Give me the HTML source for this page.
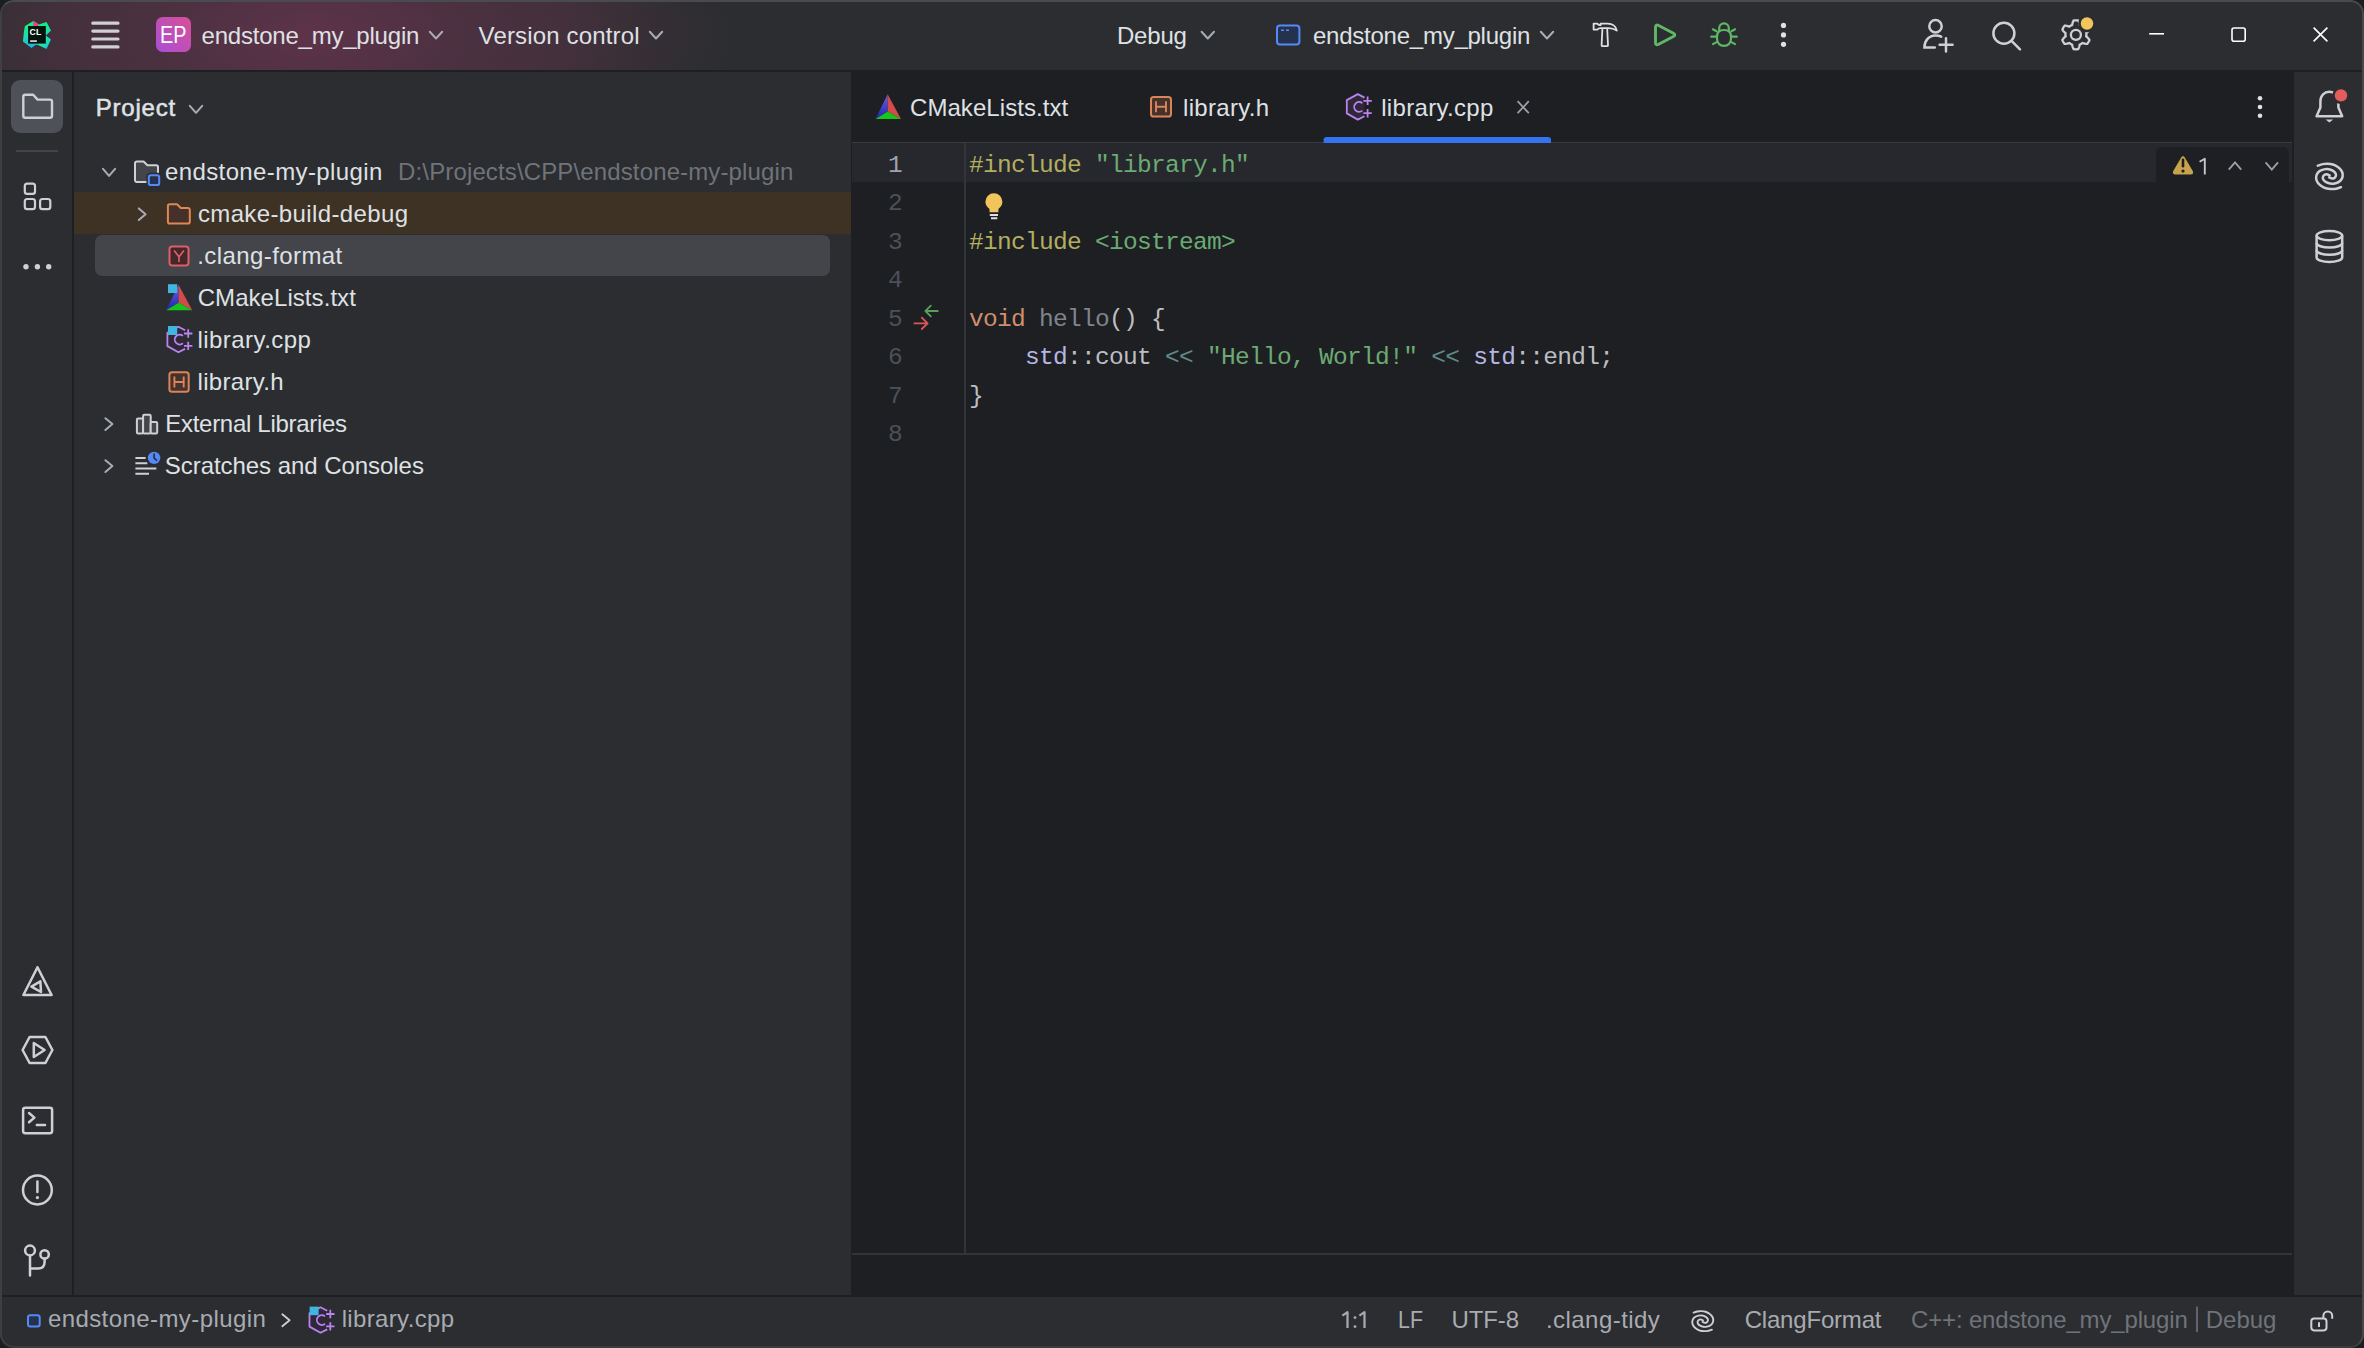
<!DOCTYPE html>
<html><head><meta charset="utf-8"><style>
html,body{margin:0;padding:0;}
body{width:2364px;height:1348px;overflow:hidden;position:relative;background:#1C1D20;font-family:"Liberation Sans", sans-serif;}
.r{position:absolute;}
.t{position:absolute;white-space:pre;line-height:1;font-family:"Liberation Sans", sans-serif;}
.c{position:absolute;white-space:pre;line-height:1;font-family:"Liberation Mono", monospace;}
</style></head><body>
<div class="r" style="left:0;top:0;width:2360px;height:1344px;border-style:solid;border-width:2px;border-color:#4A4B4F #48494B #3C3C3C #3E3F41;border-radius:14px;background:#2B2D30;"></div>
<div class="r" style="left:2px;top:2px;width:2360px;height:68px;border-radius:12px 12px 0 0;background:radial-gradient(ellipse 430px 200px at 310px 32px, #5e3349 0%, #4c3141 33%, #44303c 58%, #302e32 88%, #2b2d30 100%), #2B2D30;"></div>
<div class="r" style="left:2px;top:70px;width:2360px;height:2px;background:#1E1F22"></div>
<div class="r" style="left:72px;top:72px;width:2px;height:1223px;background:#1E1F22"></div>
<div class="r" style="left:851px;top:72px;width:1441px;height:1223px;background:#1E1F22"></div>
<div class="r" style="left:2292px;top:72px;width:2px;height:1223px;background:#1E1F22"></div>
<div class="r" style="left:2px;top:1295px;width:2360px;height:2px;background:#1E1F22"></div>
<!-- editor details -->
<div class="r" style="left:852px;top:142px;width:1440px;height:1px;background:#393B40"></div>
<div class="r" style="left:852px;top:143px;width:1440px;height:39px;background:#26282E"></div>
<div class="r" style="left:2156px;top:147px;width:133px;height:35px;background:#1E1F22;border-radius:6px 6px 0 0"></div>
<div class="r" style="left:964px;top:143px;width:2px;height:1110px;background:#313438"></div>
<div class="r" style="left:852px;top:1253px;width:1440px;height:2px;background:#313438"></div>
<!-- project tree rows -->
<div class="r" style="left:74px;top:192px;width:777px;height:42px;background:#3D3223"></div>
<div class="r" style="left:95px;top:235px;width:735px;height:41px;background:#43454A;border-radius:7px"></div>
<div class="r" style="left:11px;top:80px;width:52px;height:53px;background:#4E5157;border-radius:9px"></div>
<svg class="r" style="left:0;top:0" width="2364" height="1348"><defs>
<linearGradient id="epg" x1="0" y1="1" x2="1" y2="0"><stop offset="0" stop-color="#A94FD6"/><stop offset="1" stop-color="#D84F96"/></linearGradient>
<linearGradient id="clg" x1="0.2" y1="0" x2="0.4" y2="1"><stop offset="0" stop-color="#08F96A"/><stop offset="0.5" stop-color="#22DDAA"/><stop offset="1" stop-color="#14B0F2"/></linearGradient>
<linearGradient id="clg2" x1="0" y1="0.2" x2="1" y2="0.8"><stop offset="0" stop-color="#10F27A"/><stop offset="0.6" stop-color="#22E0B0"/><stop offset="1" stop-color="#19B5E8"/></linearGradient>
<linearGradient id="cmb" x1="0" y1="0" x2="0" y2="1"><stop offset="0" stop-color="#6A67E0"/><stop offset="1" stop-color="#1F1FAF"/></linearGradient>
</defs><g>
<polygon points="24.9,26 33.4,20.9 38.9,24.5 46.5,21.9 51,30.4 45.9,35.5 50.8,39.4 46.5,48.8 37.7,44.8 35.5,45 31.5,48.1 22.9,41.4 24,31.2" fill="url(#clg)"/>
<polygon points="45.9,36 50.8,39.4 46.5,48.8 37.7,44.8 36,44 45.8,42" fill="url(#clg2)"/>
<polygon points="33.4,20.9 38.9,24.5 37.4,26.5 33.4,26.2" fill="#F23C8C"/>
<rect x="28.1" y="26" width="17.7" height="17.6" fill="#03140C"/>
<text x="29.6" y="35" font-family="Liberation Sans" font-weight="700" font-size="9.4" fill="#fff" textLength="11.6" lengthAdjust="spacingAndGlyphs">CL</text>
<rect x="30.1" y="40.2" width="6.8" height="1.8" fill="#ccc"/>
</g>
<path d="M92.8,23.2 H118 M92.8,31.1 H118 M92.8,39 H118 M92.8,46.9 H118" stroke="#CED0D6" stroke-width="3.2" stroke-linecap="round" fill="none"/>
<rect x="156" y="17" width="35" height="35" rx="6.5" fill="url(#epg)"/>
<path d="M429.8,31.8 L436.0,38.5 L442.2,31.8" stroke="#A8ADB5" stroke-width="2" fill="none" stroke-linecap="round" stroke-linejoin="round"/>
<path d="M649.8,31.8 L656.0,38.5 L662.2,31.8" stroke="#A8ADB5" stroke-width="2" fill="none" stroke-linecap="round" stroke-linejoin="round"/>
<path d="M1201.6,31.8 L1207.8,38.5 L1214.0,31.8" stroke="#A8ADB5" stroke-width="2" fill="none" stroke-linecap="round" stroke-linejoin="round"/>
<path d="M1540.8,31.8 L1547.0,38.5 L1553.2,31.8" stroke="#A8ADB5" stroke-width="2" fill="none" stroke-linecap="round" stroke-linejoin="round"/>
<rect x="1277" y="25.6" width="22.4" height="18.8" rx="3" stroke="#548AF7" stroke-width="2" fill="#25324D"/>
<path d="M1281,30.2 H1284 M1286,30.2 H1289" stroke="#548AF7" stroke-width="1.5"/>
<path d="M1593.6,23.6 H1597.2 Q1598.6,25.2 1600.6,25.2 V23.6 H1607.6 C1612.4,23.6 1616,26.4 1616.8,30.6 C1614.2,28.9 1611.6,28.2 1608.6,28.2 H1600.6 Q1598.6,28.2 1597.2,29.6 H1593.6 Z" stroke="#DFE1E5" stroke-width="1.8" fill="none" stroke-linejoin="round"/>
<path d="M1602.4,28.8 L1601.6,45.2 Q1601.6,46.2 1602.6,46.2 H1607 Q1608,46.2 1608,45.2 L1607.2,28.8" stroke="#DFE1E5" stroke-width="1.8" fill="none" stroke-linejoin="round"/>
<path d="M1655.5,27.4 Q1655.5,23.9 1658.6,25.5 L1673.4,33.3 Q1676.3,34.9 1673.4,36.5 L1658.6,44.3 Q1655.5,45.9 1655.5,42.4 Z" stroke="#5FB865" stroke-width="2.9" fill="none" stroke-linejoin="round"/>
<g stroke="#5FB865" stroke-width="2.2" fill="none" stroke-linecap="round"><path d="M1719.2,30.2 V28.2 A4.8,4.8 0 0 1 1728.8,28.2 V30.2"/><path d="M1717,37 C1717,32.4 1719.6,30 1724,30 C1728.4,30 1731,32.4 1731,37 V38.6 C1731,43.2 1728,45.8 1724,45.8 C1720,45.8 1717,43.2 1717,38.6 Z"/><path d="M1712.9,29.3 L1716.6,31.3 M1711.2,36.7 H1716 M1712.9,44.1 L1716.6,42.1 M1735.1,29.3 L1731.4,31.3 M1736.8,36.7 H1732 M1735.1,44.1 L1731.4,42.1"/></g>
<circle cx="1783.5" cy="25.4" r="2.6" fill="#DFE1E5"/>
<circle cx="1783.5" cy="34.9" r="2.6" fill="#DFE1E5"/>
<circle cx="1783.5" cy="44.3" r="2.6" fill="#DFE1E5"/>
<g stroke="#CED0D6" stroke-width="2.5" fill="none" stroke-linecap="round"><circle cx="1935.5" cy="26.2" r="6.2"/><path d="M1941.2,36.6 C1939.6,35.8 1937.6,35.4 1935.4,35.4 C1929,35.4 1924.4,40.6 1924.4,47.4 H1934.8"/><path d="M1939.6,44.8 H1952.6 M1946,38.2 V51.4"/></g>
<g stroke="#CED0D6" stroke-width="2.5" fill="none" stroke-linecap="round"><circle cx="2003.9" cy="33.3" r="10.5"/><path d="M2011.8,41.2 L2020,49.4"/></g>
<path d="M2086.40,34.80 L2086.40,34.98 L2086.39,35.17 L2086.39,35.35 L2086.37,35.53 L2086.36,35.72 L2086.34,35.90 L2086.32,36.08 L2086.30,36.26 L2086.27,36.44 L2086.54,36.68 L2086.81,36.92 L2087.10,37.18 L2087.39,37.45 L2087.68,37.74 L2087.97,38.04 L2088.26,38.34 L2088.53,38.66 L2088.79,38.99 L2089.03,39.32 L2089.24,39.66 L2089.44,40.00 L2089.34,40.23 L2089.25,40.47 L2089.15,40.70 L2089.04,40.93 L2088.93,41.16 L2088.82,41.38 L2088.70,41.61 L2088.58,41.83 L2088.46,42.05 L2088.33,42.27 L2088.20,42.48 L2088.06,42.70 L2087.92,42.91 L2087.78,43.12 L2087.63,43.32 L2087.48,43.53 L2087.33,43.73 L2087.17,43.92 L2086.78,43.93 L2086.38,43.91 L2085.97,43.87 L2085.56,43.81 L2085.15,43.73 L2084.74,43.64 L2084.34,43.54 L2083.94,43.42 L2083.56,43.31 L2083.19,43.19 L2082.84,43.07 L2082.51,42.96 L2082.36,43.07 L2082.22,43.19 L2082.07,43.29 L2081.92,43.40 L2081.77,43.50 L2081.62,43.61 L2081.46,43.70 L2081.31,43.80 L2081.15,43.89 L2080.99,43.98 L2080.83,44.07 L2080.67,44.16 L2080.50,44.24 L2080.34,44.32 L2080.17,44.39 L2080.00,44.47 L2079.83,44.54 L2079.66,44.60 L2079.59,44.95 L2079.52,45.31 L2079.44,45.69 L2079.35,46.08 L2079.25,46.47 L2079.14,46.87 L2079.01,47.27 L2078.87,47.67 L2078.72,48.05 L2078.55,48.43 L2078.37,48.78 L2078.17,49.12 L2077.92,49.16 L2077.67,49.19 L2077.42,49.22 L2077.16,49.24 L2076.91,49.26 L2076.66,49.28 L2076.41,49.29 L2076.15,49.30 L2075.90,49.30 L2075.65,49.30 L2075.39,49.29 L2075.14,49.28 L2074.89,49.26 L2074.64,49.24 L2074.38,49.22 L2074.13,49.19 L2073.88,49.16 L2073.63,49.12 L2073.43,48.78 L2073.25,48.43 L2073.08,48.05 L2072.93,47.67 L2072.79,47.27 L2072.66,46.87 L2072.55,46.47 L2072.45,46.08 L2072.36,45.69 L2072.28,45.31 L2072.21,44.95 L2072.14,44.60 L2071.97,44.54 L2071.80,44.47 L2071.63,44.39 L2071.46,44.32 L2071.30,44.24 L2071.13,44.16 L2070.97,44.07 L2070.81,43.98 L2070.65,43.89 L2070.49,43.80 L2070.34,43.70 L2070.18,43.61 L2070.03,43.50 L2069.88,43.40 L2069.73,43.29 L2069.58,43.19 L2069.44,43.07 L2069.29,42.96 L2068.96,43.07 L2068.61,43.19 L2068.24,43.31 L2067.86,43.42 L2067.46,43.54 L2067.06,43.64 L2066.65,43.73 L2066.24,43.81 L2065.83,43.87 L2065.42,43.91 L2065.02,43.93 L2064.63,43.92 L2064.47,43.73 L2064.32,43.53 L2064.17,43.32 L2064.02,43.12 L2063.88,42.91 L2063.74,42.70 L2063.60,42.48 L2063.47,42.27 L2063.34,42.05 L2063.22,41.83 L2063.10,41.61 L2062.98,41.38 L2062.87,41.16 L2062.76,40.93 L2062.65,40.70 L2062.55,40.47 L2062.46,40.23 L2062.36,40.00 L2062.56,39.66 L2062.77,39.32 L2063.01,38.99 L2063.27,38.66 L2063.54,38.34 L2063.83,38.04 L2064.12,37.74 L2064.41,37.45 L2064.70,37.18 L2064.99,36.92 L2065.26,36.68 L2065.53,36.44 L2065.50,36.26 L2065.48,36.08 L2065.46,35.90 L2065.44,35.72 L2065.43,35.53 L2065.41,35.35 L2065.41,35.17 L2065.40,34.98 L2065.40,34.80 L2065.40,34.62 L2065.41,34.43 L2065.41,34.25 L2065.43,34.07 L2065.44,33.88 L2065.46,33.70 L2065.48,33.52 L2065.50,33.34 L2065.53,33.16 L2065.26,32.92 L2064.99,32.68 L2064.70,32.42 L2064.41,32.15 L2064.12,31.86 L2063.83,31.56 L2063.54,31.26 L2063.27,30.94 L2063.01,30.61 L2062.77,30.28 L2062.56,29.94 L2062.36,29.60 L2062.46,29.37 L2062.55,29.13 L2062.65,28.90 L2062.76,28.67 L2062.87,28.44 L2062.98,28.22 L2063.10,27.99 L2063.22,27.77 L2063.34,27.55 L2063.47,27.33 L2063.60,27.12 L2063.74,26.90 L2063.88,26.69 L2064.02,26.48 L2064.17,26.28 L2064.32,26.07 L2064.47,25.87 L2064.63,25.68 L2065.02,25.67 L2065.42,25.69 L2065.83,25.73 L2066.24,25.79 L2066.65,25.87 L2067.06,25.96 L2067.46,26.06 L2067.86,26.18 L2068.24,26.29 L2068.61,26.41 L2068.96,26.53 L2069.29,26.64 L2069.44,26.53 L2069.58,26.41 L2069.73,26.31 L2069.88,26.20 L2070.03,26.10 L2070.18,25.99 L2070.34,25.90 L2070.49,25.80 L2070.65,25.71 L2070.81,25.62 L2070.97,25.53 L2071.13,25.44 L2071.30,25.36 L2071.46,25.28 L2071.63,25.21 L2071.80,25.13 L2071.97,25.06 L2072.14,25.00 L2072.21,24.65 L2072.28,24.29 L2072.36,23.91 L2072.45,23.52 L2072.55,23.13 L2072.66,22.73 L2072.79,22.33 L2072.93,21.93 L2073.08,21.55 L2073.25,21.17 L2073.43,20.82 L2073.63,20.48 L2073.88,20.44 L2074.13,20.41 L2074.38,20.38 L2074.64,20.36 L2074.89,20.34 L2075.14,20.32 L2075.39,20.31 L2075.65,20.30 L2075.90,20.30 L2076.15,20.30 L2076.41,20.31 L2076.66,20.32 L2076.91,20.34 L2077.16,20.36 L2077.42,20.38 L2077.67,20.41 L2077.92,20.44 L2078.17,20.48 L2078.37,20.82 L2078.55,21.17 L2078.72,21.55 L2078.87,21.93 L2079.01,22.33 L2079.14,22.73 L2079.25,23.13 L2079.35,23.52 L2079.44,23.91 L2079.52,24.29 L2079.59,24.65 L2079.66,25.00 L2079.83,25.06 L2080.00,25.13 L2080.17,25.21 L2080.34,25.28 L2080.50,25.36 L2080.67,25.44 L2080.83,25.53 L2080.99,25.62 L2081.15,25.71 L2081.31,25.80 L2081.46,25.90 L2081.62,25.99 L2081.77,26.10 L2081.92,26.20 L2082.07,26.31 L2082.22,26.41 L2082.36,26.53 L2082.51,26.64 L2082.84,26.53 L2083.19,26.41 L2083.56,26.29 L2083.94,26.18 L2084.34,26.06 L2084.74,25.96 L2085.15,25.87 L2085.56,25.79 L2085.97,25.73 L2086.38,25.69 L2086.78,25.67 L2087.17,25.68 L2087.33,25.87 L2087.48,26.07 L2087.63,26.28 L2087.78,26.48 L2087.92,26.69 L2088.06,26.90 L2088.20,27.12 L2088.33,27.33 L2088.46,27.55 L2088.58,27.77 L2088.70,27.99 L2088.82,28.22 L2088.93,28.44 L2089.04,28.67 L2089.15,28.90 L2089.25,29.13 L2089.34,29.37 L2089.44,29.60 L2089.24,29.94 L2089.03,30.28 L2088.79,30.61 L2088.53,30.94 L2088.26,31.26 L2087.97,31.56 L2087.68,31.86 L2087.39,32.15 L2087.10,32.42 L2086.81,32.68 L2086.54,32.92 L2086.27,33.16 L2086.30,33.34 L2086.32,33.52 L2086.34,33.70 L2086.36,33.88 L2086.37,34.07 L2086.39,34.25 L2086.39,34.43 L2086.40,34.62 Z" stroke="#CED0D6" stroke-width="2.3" fill="none"/>
<circle cx="2075.9" cy="34.8" r="5" stroke="#CED0D6" stroke-width="2.3" fill="none"/>
<circle cx="2087" cy="23.5" r="8.8" fill="#2B2D30"/><circle cx="2087" cy="23.5" r="6.2" fill="#F2C55C"/>
<g stroke="#FFFFFF" stroke-width="1.6" fill="none"><path d="M2149.2,33.8 H2164"/><rect x="2232" y="28" width="13.2" height="13.2" rx="2"/><path d="M2313.6,27.6 L2327.4,41.4 M2327.4,27.6 L2313.6,41.4"/></g>
<path d="M23.3,96.8 a2,2 0 0 1 2,-2 H33.2 L37.6,99.6 H50 a2,2 0 0 1 2,2 V115.8 a2,2 0 0 1 -2,2 H25.3 a2,2 0 0 1 -2,-2 Z" stroke="#CED0D6" stroke-width="2.4" fill="none" stroke-linejoin="round"/>
<rect x="16" y="150" width="42" height="2" fill="#43454A"/>
<g stroke="#CED0D6" stroke-width="2.2" fill="none"><rect x="24.8" y="183.7" width="10.2" height="10.2" rx="2.4"/><rect x="24.8" y="199" width="10.2" height="10.2" rx="2.4"/><rect x="40.1" y="199" width="10.2" height="10.2" rx="2.4"/></g>
<circle cx="26" cy="266.7" r="2.7" fill="#CED0D6"/>
<circle cx="37.4" cy="266.7" r="2.7" fill="#CED0D6"/>
<circle cx="48.7" cy="266.7" r="2.7" fill="#CED0D6"/>
<g stroke="#CED0D6" stroke-width="2.5" fill="none" stroke-linejoin="round" stroke-linecap="round"><path d="M37.5,967.2 L23.4,995 H51.6 Z"/><path d="M31.4,986.6 L40.4,981.4 L41,992 Z"/><path d="M22.6,1050 L29.6,1037 H45.4 L52.4,1050 L45.4,1063 H29.6 Z"/><path d="M33.8,1043 L44.6,1050 L33.8,1057 Z"/><rect x="23.1" y="1107.7" width="29" height="25.6" rx="2.2"/><path d="M29,1113 L34.4,1117.6 L29,1122.2 M36.8,1125 H45"/><circle cx="37.4" cy="1190" r="14.4"/><path d="M37.4,1181.5 V1192"/><circle cx="30" cy="1250.5" r="4.9"/><circle cx="44.6" cy="1254.4" r="4.2"/><path d="M30,1255.4 V1275.6 M30,1268.6 H38 Q44.6,1268.6 44.6,1262 V1258.6"/></g>
<circle cx="37.4" cy="1197.6" r="1.6" fill="#CED0D6"/>
<path d="M189.8,105.8 L196.0,112.8 L202.2,105.8" stroke="#A8ADB5" stroke-width="2" fill="none" stroke-linecap="round" stroke-linejoin="round"/>
<path d="M103.0,168.8 L109.05,175.9 L115.10000000000001,168.8" stroke="#A8ADB5" stroke-width="2" fill="none" stroke-linecap="round" stroke-linejoin="round"/>
<path d="M135,163.3 a1.8,1.8 0 0 1 1.8,-1.8 H143.6 L147.4,165.3 H156.2 a1.8,1.8 0 0 1 1.8,1.8 V180.2 a1.8,1.8 0 0 1 -1.8,1.8 H136.8 a1.8,1.8 0 0 1 -1.8,-1.8 Z" stroke="#CED0D6" stroke-width="2" fill="#43454A" stroke-linejoin="round"/>
<rect x="146.4" y="172.8" width="15.2" height="14.6" rx="3.6" fill="#2B2D30"/>
<rect x="148.8" y="175.3" width="10.4" height="9.8" rx="2.2" stroke="#548AF7" stroke-width="2" fill="#25324D"/>
<path d="M138.8,208.4 L145.6,214.2 L138.8,219.99999999999997" stroke="#A8ADB5" stroke-width="2" fill="none" stroke-linecap="round" stroke-linejoin="round"/>
<path d="M167.9,206 a1.8,1.8 0 0 1 1.8,-1.8 H177 L180.8,208 H188 a1.8,1.8 0 0 1 1.8,1.8 V221.8 a1.8,1.8 0 0 1 -1.8,1.8 H169.7 a1.8,1.8 0 0 1 -1.8,-1.8 Z" stroke="#E08855" stroke-width="2" fill="#45302A" stroke-linejoin="round"/>
<rect x="169.5" y="246.4" width="19" height="19" rx="2.6" stroke="#DD5F66" stroke-width="2" fill="#43272A"/><path d="M174.1,250.4 L179.0,256.8 L183.9,250.4 M179.0,256.8 V262.0" stroke="#DD5F66" stroke-width="1.7" fill="none"/>
<polygon points="178.54999999999998,284.8 166.1,310.3 178.628,302.65000000000003" fill="url(#cmb)"/><polygon points="178.54999999999998,284.8 178.628,302.65000000000003 192.2,310.3" fill="#D44B4B"/><polygon points="166.1,310.3 178.628,302.65000000000003 192.2,310.3" fill="#16C61B"/>
<rect x="168" y="284.2" width="9.2" height="8.8" fill="#3FB5DF"/>
<path d="M184.90,330.00 L178.40,326.80 L167.40,332.80 L167.40,346.10 L178.40,352.30 L184.90,349.10 V330.0" fill="#2F2838" stroke="none"/><path d="M185.10,330.30 L178.40,326.80 L167.40,332.80 L167.40,346.10 L178.40,352.30 L185.10,348.90" stroke="#BA83F0" stroke-width="1.8" fill="none" stroke-linejoin="round"/><path d="M182.90,335.90 A4.9,4.9 0 1 0 182.90,343.30" stroke="#BA83F0" stroke-width="1.8" fill="none"/><path d="M184.00,333.50 H192.40 M188.20,329.30 V337.7 M184.00,345.90 H192.4 M188.20,341.70 V350.09999999999997" stroke="#BA83F0" stroke-width="1.8" fill="none"/>
<rect x="168" y="326" width="9.2" height="9" fill="#3FB5DF"/>
<rect x="169.4" y="372.3" width="19.3" height="19.5" rx="2.6" stroke="#D9845B" stroke-width="2" fill="#45322B"/><path d="M174.4,376.5 V387.6 M183.70000000000002,376.5 V387.6 M174.4,382.05 H183.70000000000002" stroke="#D9845B" stroke-width="1.9" fill="none"/>
<path d="M105.39999999999999,418.2 L112.39999999999999,424.09999999999997 L105.39999999999999,429.99999999999994" stroke="#A8ADB5" stroke-width="2" fill="none" stroke-linecap="round" stroke-linejoin="round"/>
<g stroke="#CED0D6" stroke-width="2" fill="#43454A" stroke-linejoin="round"><rect x="136.9" y="418.4" width="6.2" height="15.1" rx="1.2"/><rect x="143.1" y="414.8" width="7.6" height="18.7" rx="1.2"/><rect x="150.7" y="422" width="6.5" height="11.5" rx="1.2"/></g>
<path d="M105.39999999999999,460.2 L112.39999999999999,466.09999999999997 L105.39999999999999,471.99999999999994" stroke="#A8ADB5" stroke-width="2" fill="none" stroke-linecap="round" stroke-linejoin="round"/>
<path d="M135.4,458 H145.6 M135.4,463.2 H147.4 M135.4,468.5 H156.4 M135.4,473.8 H149" stroke="#CED0D6" stroke-width="2" fill="none"/>
<circle cx="154.1" cy="457.9" r="8" fill="#2B2D30"/><circle cx="154.1" cy="457.9" r="6.2" fill="#548AF7"/><path d="M154.1,453.6 V458.2 L157,460.6" stroke="#2B2D30" stroke-width="1.6" fill="none"/>
<polygon points="887.65,94.3 875.5,119 887.74,111.59" fill="url(#cmb)"/><polygon points="887.65,94.3 887.74,111.59 901,119" fill="#D44B4B"/><polygon points="875.5,119 887.74,111.59 901,119" fill="#16C61B"/>
<rect x="1151" y="97" width="20" height="19.5" rx="2.6" stroke="#D9845B" stroke-width="2" fill="#45322B"/><path d="M1156,101.2 V112.3 M1166,101.2 V112.3 M1156,106.75 H1166" stroke="#D9845B" stroke-width="1.9" fill="none"/>
<path d="M1364.30,97.30 L1357.80,94.10 L1346.80,100.10 L1346.80,113.40 L1357.80,119.60 L1364.30,116.40 V97.3" fill="#2F2838" stroke="none"/><path d="M1364.50,97.60 L1357.80,94.10 L1346.80,100.10 L1346.80,113.40 L1357.80,119.60 L1364.50,116.20" stroke="#BA83F0" stroke-width="1.8" fill="none" stroke-linejoin="round"/><path d="M1362.30,103.20 A4.9,4.9 0 1 0 1362.30,110.60" stroke="#BA83F0" stroke-width="1.8" fill="none"/><path d="M1363.40,100.80 H1371.80 M1367.60,96.60 V105 M1363.40,113.20 H1371.8 M1367.60,109.00 V117.4" stroke="#BA83F0" stroke-width="1.8" fill="none"/>
<path d="M1517.6,101.2 L1528.8,113.2 M1528.8,101.2 L1517.6,113.2" stroke="#9DA0A8" stroke-width="1.8" fill="none"/>
<path d="M1323.6,143 V140 a3,3 0 0 1 3,-3 H1548 a3,3 0 0 1 3,3 V143 Z" fill="#3574F0"/>
<circle cx="2260" cy="98.3" r="2.3" fill="#DFE1E5"/>
<circle cx="2260" cy="107" r="2.3" fill="#DFE1E5"/>
<circle cx="2260" cy="115.8" r="2.3" fill="#DFE1E5"/>
<path d="M2316.6,116.2 L2320.4,107.6 V101.4 C2320.4,95.4 2324.4,91.8 2329.4,91.8 C2334.4,91.8 2338.4,95.4 2338.4,101.4 V107.6 L2342.2,116.2 Z" stroke="#CED0D6" stroke-width="2.5" fill="none" stroke-linejoin="round"/>
<path d="M2325.6,119.4 H2333.2 L2329.4,122.4 Z" fill="#CED0D6"/>
<circle cx="2341" cy="95.4" r="8.6" fill="#2B2D30"/><circle cx="2341" cy="95.4" r="6.2" fill="#E35D5D"/>
<path d="M2317.80,165.63 C2318.60,165.38 2320.95,164.43 2322.59,164.12 C2324.23,163.80 2325.91,163.68 2327.63,163.74 C2329.36,163.80 2331.29,163.99 2332.93,164.50 C2334.57,165.00 2336.13,165.84 2337.47,166.77 C2338.82,167.69 2340.14,168.83 2341.00,170.04 C2341.86,171.26 2342.47,172.69 2342.64,174.08 C2342.81,175.47 2342.58,177.11 2342.01,178.37 C2341.44,179.63 2340.46,180.81 2339.24,181.65 C2338.02,182.49 2336.21,183.10 2334.70,183.41 C2333.18,183.73 2331.59,183.75 2330.16,183.54 C2328.73,183.33 2327.24,182.76 2326.12,182.15 C2325.01,181.54 2324.02,180.68 2323.47,179.88 C2322.93,179.08 2322.74,178.16 2322.84,177.36 C2322.95,176.56 2323.47,175.61 2324.10,175.09 C2324.73,174.56 2325.70,174.15 2326.63,174.21 C2327.55,174.26 2329.15,175.24 2329.65,175.44" stroke="#CED0D6" stroke-width="2.5" fill="none" stroke-linecap="round"/><path d="M2341.00,187.17 C2340.20,187.42 2337.85,188.37 2336.21,188.68 C2334.57,189.00 2332.89,189.12 2331.17,189.06 C2329.44,189.00 2327.51,188.81 2325.87,188.30 C2324.23,187.80 2322.67,186.96 2321.33,186.03 C2319.98,185.11 2318.66,183.97 2317.80,182.76 C2316.94,181.54 2316.33,180.11 2316.16,178.72 C2315.99,177.33 2316.22,175.69 2316.79,174.43 C2317.36,173.17 2318.34,171.99 2319.56,171.15 C2320.78,170.31 2322.59,169.70 2324.10,169.39 C2325.62,169.07 2327.21,169.05 2328.64,169.26 C2330.07,169.47 2331.56,170.04 2332.68,170.65 C2333.79,171.26 2334.78,172.12 2335.33,172.92 C2335.87,173.72 2336.06,174.64 2335.96,175.44 C2335.85,176.24 2335.33,177.19 2334.70,177.71 C2334.07,178.24 2333.10,178.65 2332.17,178.59 C2331.25,178.54 2329.65,177.56 2329.15,177.36" stroke="#CED0D6" stroke-width="2.5" fill="none" stroke-linecap="round"/>
<g stroke="#CED0D6" stroke-width="2.5" fill="none"><ellipse cx="2329.4" cy="235.6" rx="12.8" ry="4.6"/><path d="M2316.6,235.6 V257.4 C2316.6,260 2322.4,262 2329.4,262 C2336.4,262 2342.2,260 2342.2,257.4 V235.6"/><path d="M2316.6,243 C2316.6,245.6 2322.4,247.6 2329.4,247.6 C2336.4,247.6 2342.2,245.6 2342.2,243 M2316.6,250.2 C2316.6,252.8 2322.4,254.8 2329.4,254.8 C2336.4,254.8 2342.2,252.8 2342.2,250.2"/></g>
<path d="M2181.2,157.4 Q2183,154.4 2184.8,157.4 L2192.6,170.8 Q2194.4,174.4 2190.4,174.4 H2175.6 Q2171.6,174.4 2173.4,170.8 Z" fill="#C9A24D"/>
<path d="M2183,159.8 V166.2" stroke="#1E1F22" stroke-width="2.6" stroke-linecap="round"/><circle cx="2183" cy="171" r="1.6" fill="#1E1F22"/>
<path d="M2228.8,169.6 L2235,162.4 L2241.2,169.6 M2265.6,162.4 L2271.8,169.6 L2278,162.4" stroke="#9DA0A8" stroke-width="1.8" fill="none"/>
<path d="M2199.6,161.8 L2204.8,158.8 V174.6" stroke="#C4C6CC" stroke-width="1.9" fill="none" stroke-linejoin="round"/>
<path d="M985.4,201.7 A8.5,8.5 0 1 1 1002.4,201.7 C1002.4,205 1000.4,207 998.4,209 V212.2 H989.5 V209 C987.4,207 985.4,205 985.4,201.7 Z" fill="#F2C55C"/>
<path d="M989.8,215 H998 M991,218.2 H997.3" stroke="#DFE1E5" stroke-width="1.9"/>
<path d="M937.8,311 H925.6 M930.8,305.6 L925.4,311 L930.8,316.4" stroke="#57A05C" stroke-width="1.8" fill="none" stroke-linecap="round" stroke-linejoin="round"/>
<path d="M914.4,323.4 H927.6 M921.8,317.6 L927.6,323.4 L921.8,329" stroke="#E05555" stroke-width="1.8" fill="none" stroke-linecap="round" stroke-linejoin="round"/>
<path d="M1342.4,1315.6 L1347.5,1312.1 V1328 M1359.4,1315.6 L1364.5,1312.1 V1328" stroke="#A8ABB2" stroke-width="2.2" fill="none" stroke-linejoin="round"/><circle cx="1355" cy="1317.6" r="1.45" fill="#A8ABB2"/><circle cx="1355" cy="1326.6" r="1.45" fill="#A8ABB2"/>
<rect x="28" y="1315.3" width="11.7" height="11.1" rx="2.2" stroke="#548AF7" stroke-width="2" fill="#25324D"/>
<path d="M282.3,1314.2 L289.6,1320.2 L282.3,1326.2" stroke="#CED0D6" stroke-width="1.8" fill="none" stroke-linecap="round" stroke-linejoin="round"/>
<path d="M327.00,1310.50 L320.50,1307.30 L309.50,1313.30 L309.50,1326.60 L320.50,1332.80 L327.00,1329.60 V1310.5" fill="#2F2838" stroke="none"/><path d="M327.20,1310.80 L320.50,1307.30 L309.50,1313.30 L309.50,1326.60 L320.50,1332.80 L327.20,1329.40" stroke="#BA83F0" stroke-width="1.8" fill="none" stroke-linejoin="round"/><path d="M325.00,1316.40 A4.9,4.9 0 1 0 325.00,1323.80" stroke="#BA83F0" stroke-width="1.8" fill="none"/><path d="M326.10,1314.00 H334.50 M330.30,1309.80 V1318.2 M326.10,1326.40 H334.5 M330.30,1322.20 V1330.6000000000001" stroke="#BA83F0" stroke-width="1.8" fill="none"/>
<rect x="309.6" y="1306.6" width="9" height="8.6" fill="#3FB5DF"/>
<path d="M1693.58,1312.64 C1694.22,1312.44 1696.08,1311.70 1697.37,1311.45 C1698.67,1311.20 1699.99,1311.10 1701.36,1311.15 C1702.72,1311.20 1704.24,1311.35 1705.54,1311.75 C1706.83,1312.14 1708.06,1312.81 1709.13,1313.54 C1710.19,1314.27 1711.23,1315.17 1711.92,1316.13 C1712.60,1317.09 1713.08,1318.22 1713.21,1319.32 C1713.34,1320.41 1713.16,1321.71 1712.71,1322.70 C1712.26,1323.70 1711.48,1324.63 1710.52,1325.29 C1709.56,1325.96 1708.13,1326.44 1706.93,1326.69 C1705.74,1326.94 1704.48,1326.95 1703.35,1326.79 C1702.22,1326.62 1701.04,1326.17 1700.16,1325.69 C1699.28,1325.21 1698.50,1324.53 1698.07,1323.90 C1697.64,1323.27 1697.49,1322.54 1697.57,1321.91 C1697.65,1321.28 1698.07,1320.53 1698.57,1320.11 C1699.06,1319.70 1699.83,1319.37 1700.56,1319.42 C1701.29,1319.46 1702.55,1320.23 1702.95,1320.39" stroke="#CED0D6" stroke-width="1.9" fill="none" stroke-linecap="round"/><path d="M1711.92,1329.66 C1711.28,1329.86 1709.42,1330.60 1708.13,1330.85 C1706.83,1331.10 1705.51,1331.20 1704.14,1331.15 C1702.78,1331.10 1701.26,1330.95 1699.96,1330.55 C1698.67,1330.16 1697.44,1329.49 1696.37,1328.76 C1695.31,1328.03 1694.27,1327.13 1693.58,1326.17 C1692.90,1325.21 1692.42,1324.08 1692.29,1322.98 C1692.16,1321.89 1692.34,1320.59 1692.79,1319.60 C1693.24,1318.60 1694.02,1317.67 1694.98,1317.01 C1695.94,1316.34 1697.37,1315.86 1698.57,1315.61 C1699.76,1315.36 1701.02,1315.35 1702.15,1315.51 C1703.28,1315.68 1704.46,1316.13 1705.34,1316.61 C1706.22,1317.09 1707.00,1317.77 1707.43,1318.40 C1707.86,1319.03 1708.01,1319.76 1707.93,1320.39 C1707.85,1321.02 1707.43,1321.77 1706.93,1322.19 C1706.44,1322.60 1705.67,1322.93 1704.94,1322.88 C1704.21,1322.84 1702.95,1322.07 1702.55,1321.91" stroke="#CED0D6" stroke-width="1.9" fill="none" stroke-linecap="round"/>
<rect x="2196.2" y="1306.6" width="1.6" height="25.4" fill="#6F737A"/>
<g stroke="#CED0D6" stroke-width="2" fill="none"><rect x="2311.3" y="1318.4" width="15.2" height="12" rx="2.8"/><path d="M2323.4,1318.4 V1315.8 a4.4,4.4 0 0 1 8.8,0 V1318.8"/><path d="M2319,1322.2 V1327"/></g></svg>
<div class="t" style="left:201.50px;top:23.68px;font-size:24px;font-weight:400;letter-spacing:-0.215px;color:#DFE1E5">endstone_my_plugin</div>
<div class="t" style="left:478.60px;top:23.68px;font-size:24px;font-weight:400;letter-spacing:0.156px;color:#DFE1E5">Version control</div>
<div class="t" style="left:1116.90px;top:23.98px;font-size:24px;font-weight:400;letter-spacing:-0.169px;color:#DFE1E5">Debug</div>
<div class="t" style="left:1313.00px;top:23.68px;font-size:24px;font-weight:400;letter-spacing:-0.244px;color:#DFE1E5">endstone_my_plugin</div>
<div class="t" style="left:95.70px;top:95.68px;font-size:24px;font-weight:400;-webkit-text-stroke:0.55px #DFE1E5;letter-spacing:0.795px;color:#DFE1E5">Project</div>
<div class="t" style="left:165.00px;top:159.68px;font-size:24px;font-weight:400;letter-spacing:0.386px;color:#DFE1E5">endstone-my-plugin</div>
<div class="t" style="left:398.10px;top:159.68px;font-size:24px;font-weight:400;letter-spacing:0.134px;color:#6F737A">D:\Projects\CPP\endstone-my-plugin</div>
<div class="t" style="left:197.90px;top:201.68px;font-size:24px;font-weight:400;letter-spacing:0.377px;color:#DFE1E5">cmake-build-debug</div>
<div class="t" style="left:197.30px;top:243.68px;font-size:24px;font-weight:400;letter-spacing:0.410px;color:#DFE1E5">.clang-format</div>
<div class="t" style="left:197.70px;top:285.68px;font-size:24px;font-weight:400;letter-spacing:0.061px;color:#DFE1E5">CMakeLists.txt</div>
<div class="t" style="left:197.50px;top:327.68px;font-size:24px;font-weight:400;letter-spacing:0.442px;color:#DFE1E5">library.cpp</div>
<div class="t" style="left:197.50px;top:369.68px;font-size:24px;font-weight:400;letter-spacing:0.321px;color:#DFE1E5">library.h</div>
<div class="t" style="left:165.30px;top:411.68px;font-size:24px;font-weight:400;letter-spacing:-0.297px;color:#DFE1E5">External Libraries</div>
<div class="t" style="left:164.80px;top:453.68px;font-size:24px;font-weight:400;letter-spacing:-0.050px;color:#DFE1E5">Scratches and Consoles</div>
<div class="t" style="left:910.00px;top:95.88px;font-size:24px;font-weight:400;letter-spacing:0.061px;color:#DFE1E5">CMakeLists.txt</div>
<div class="t" style="left:1183.00px;top:95.88px;font-size:24px;font-weight:400;letter-spacing:0.309px;color:#DFE1E5">library.h</div>
<div class="t" style="left:1381.20px;top:95.88px;font-size:24px;font-weight:400;letter-spacing:0.322px;color:#DFE1E5">library.cpp</div>
<div class="t" style="left:47.90px;top:1307.18px;font-size:24px;font-weight:400;letter-spacing:0.421px;color:#A8ABB2">endstone-my-plugin</div>
<div class="t" style="left:341.70px;top:1307.18px;font-size:24px;font-weight:400;letter-spacing:0.342px;color:#A8ABB2">library.cpp</div>
<div class="t" style="left:1397.61px;top:1307.68px;font-size:24px;font-weight:400;color:#A8ABB2;transform:scaleX(0.8919);transform-origin:0 0">LF</div>
<div class="t" style="left:1451.50px;top:1307.68px;font-size:24px;font-weight:400;letter-spacing:-0.111px;color:#A8ABB2">UTF-8</div>
<div class="t" style="left:1546.00px;top:1307.68px;font-size:24px;font-weight:400;letter-spacing:0.442px;color:#A8ABB2">.clang-tidy</div>
<div class="t" style="left:1744.70px;top:1307.68px;font-size:24px;font-weight:400;letter-spacing:-0.195px;color:#A8ABB2">ClangFormat</div>
<div class="t" style="left:1911.00px;top:1307.68px;font-size:24px;font-weight:400;letter-spacing:-0.157px;color:#6F737A">C++: endstone_my_plugin</div>
<div class="t" style="left:2205.80px;top:1307.68px;font-size:24px;font-weight:400;letter-spacing:-0.044px;color:#6F737A">Debug</div>
<div class="t" style="left:160.16px;top:24.31px;font-size:23.5px;font-weight:400;color:#FFFFFF;transform:scaleX(0.8425);transform-origin:0 0">EP</div>
<div class="c" style="left:969.0px;top:154.02px;font-size:24.5px;letter-spacing:-0.700px"><span style="color:#B3AE60">#include</span><span style="color:#BCBEC4"> </span><span style="color:#6AAB73">"library.h"</span></div>
<div class="c" style="left:888px;top:154.02px;font-size:24.5px;letter-spacing:-0.700px;color:#A1A3AB">1</div>
<div class="c" style="left:969.0px;top:192.45px;font-size:24.5px;letter-spacing:-0.700px"></div>
<div class="c" style="left:888px;top:192.45px;font-size:24.5px;letter-spacing:-0.700px;color:#4B5059">2</div>
<div class="c" style="left:969.0px;top:230.88px;font-size:24.5px;letter-spacing:-0.700px"><span style="color:#B3AE60">#include</span><span style="color:#BCBEC4"> </span><span style="color:#6AAB73">&lt;iostream&gt;</span></div>
<div class="c" style="left:888px;top:230.88px;font-size:24.5px;letter-spacing:-0.700px;color:#4B5059">3</div>
<div class="c" style="left:969.0px;top:269.31px;font-size:24.5px;letter-spacing:-0.700px"></div>
<div class="c" style="left:888px;top:269.31px;font-size:24.5px;letter-spacing:-0.700px;color:#4B5059">4</div>
<div class="c" style="left:969.0px;top:307.74px;font-size:24.5px;letter-spacing:-0.700px"><span style="color:#CF8E6D">void</span><span style="color:#BCBEC4"> </span><span style="color:#80848B">hello</span><span style="color:#BCBEC4">() {</span></div>
<div class="c" style="left:888px;top:307.74px;font-size:24.5px;letter-spacing:-0.700px;color:#4B5059">5</div>
<div class="c" style="left:969.0px;top:346.17px;font-size:24.5px;letter-spacing:-0.700px"><span style="color:#BCBEC4">    </span><span style="color:#B5B6E3">std</span><span style="color:#BCBEC4">::cout </span><span style="color:#5F8C8A">&lt;&lt;</span><span style="color:#BCBEC4"> </span><span style="color:#6AAB73">"Hello, World!"</span><span style="color:#BCBEC4"> </span><span style="color:#5F8C8A">&lt;&lt;</span><span style="color:#BCBEC4"> </span><span style="color:#B5B6E3">std</span><span style="color:#BCBEC4">::endl;</span></div>
<div class="c" style="left:888px;top:346.17px;font-size:24.5px;letter-spacing:-0.700px;color:#4B5059">6</div>
<div class="c" style="left:969.0px;top:384.60px;font-size:24.5px;letter-spacing:-0.700px"><span style="color:#BCBEC4">}</span></div>
<div class="c" style="left:888px;top:384.60px;font-size:24.5px;letter-spacing:-0.700px;color:#4B5059">7</div>
<div class="c" style="left:969.0px;top:423.03px;font-size:24.5px;letter-spacing:-0.700px"></div>
<div class="c" style="left:888px;top:423.03px;font-size:24.5px;letter-spacing:-0.700px;color:#4B5059">8</div>
</body></html>
